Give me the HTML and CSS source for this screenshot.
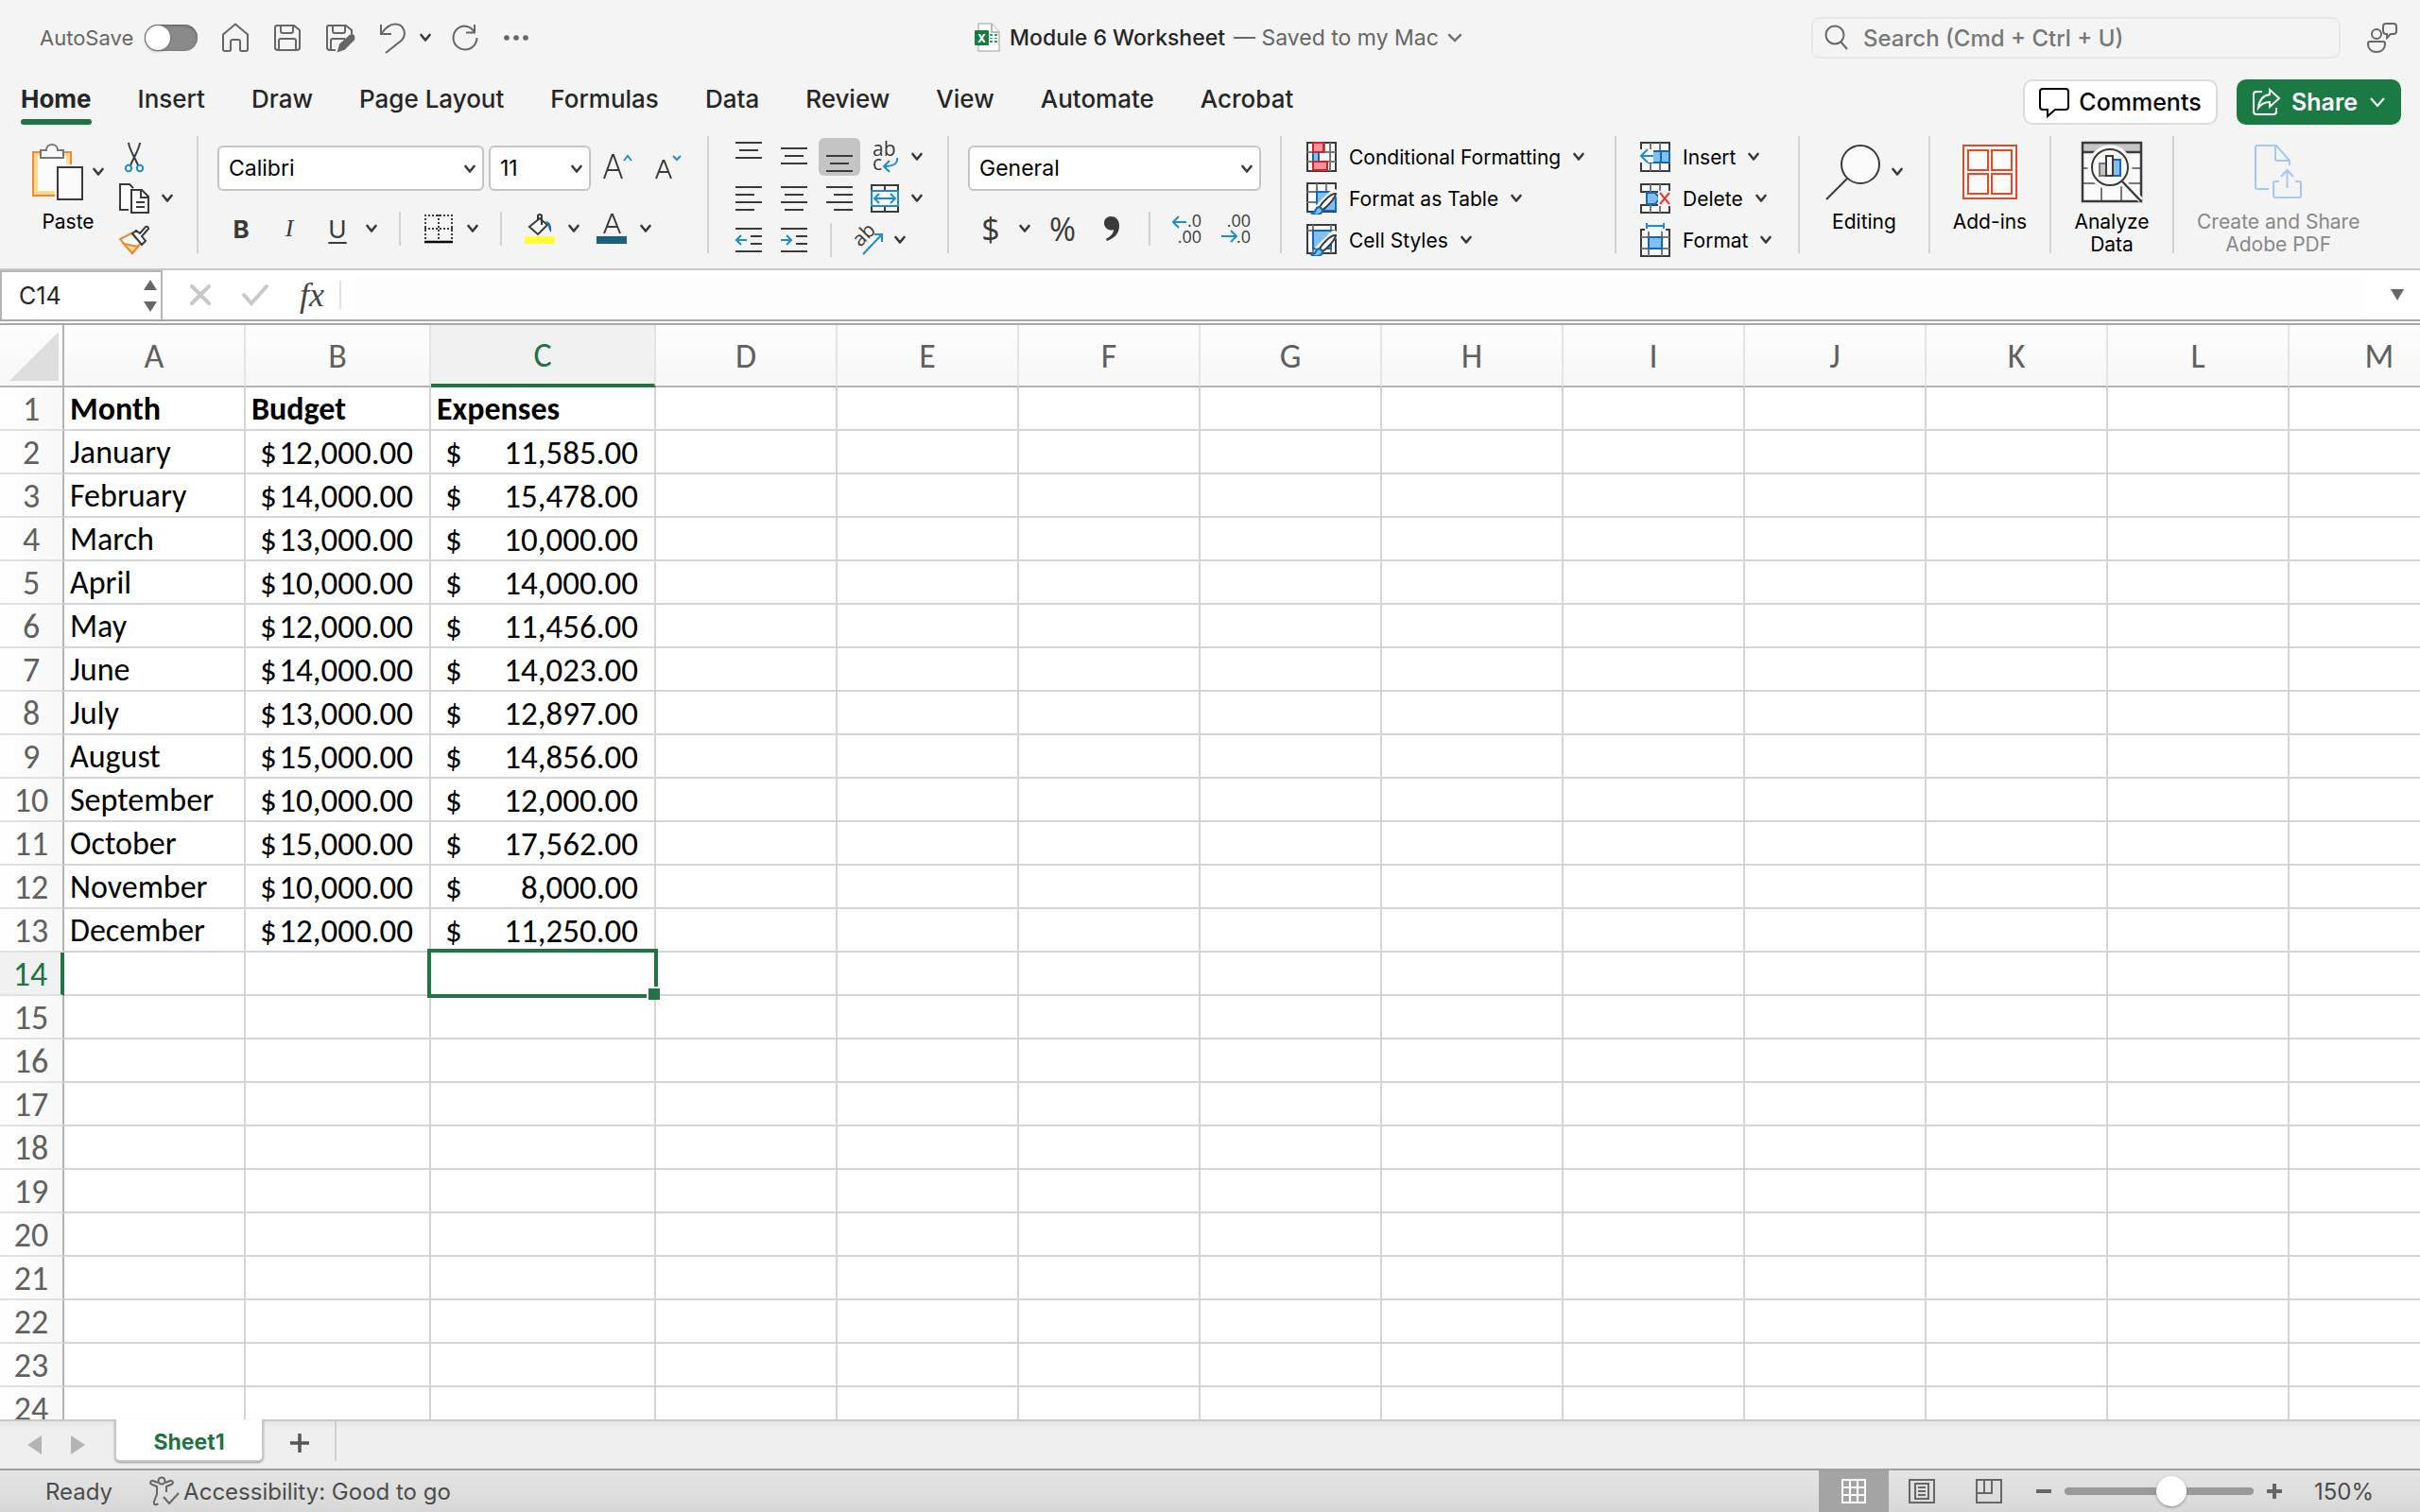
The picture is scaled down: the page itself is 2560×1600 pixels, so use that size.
FILE: index.html
```html
<!DOCTYPE html>
<html lang="en">
<head>
    <meta charset="UTF-8">
    <meta name="viewport" content="width=device-width, initial-scale=1.0">
    <title>Module 6 Worksheet</title>
    <link rel="stylesheet" href="styles.css">
</head>
<body>

    <!-- shared symbols -->
    <svg class="defs" aria-hidden="true">
        <symbol id="chev" viewBox="0 0 12 10"><path d="M1.500 2 6 7.500 10.500 2" fill="none" stroke="currentColor" stroke-width="2.600" stroke-linecap="round" stroke-linejoin="round"/></symbol>
        <symbol id="brush" viewBox="0 0 32 32">
            <path d="M31 12 16 27l-4-3L27 9q3-2 4 0z" fill="#f4f4f4" stroke="#f4f4f4" stroke-width="4"/>
            <path d="M31 11c0 4-9 14-14 17l-3-3c3-5 12-15 17-14z" fill="#fafafa" stroke="#3a3a38" stroke-width="2"/>
            <path d="M14 25c-4 0-4 3-5 5-1 1-3 1-4 1 4 4 12 2 12-3z" fill="#83beec" stroke="#1068b8" stroke-width="2"/>
        </symbol>
    </svg>

    <header class="titlebar">
        <div class="quick">
            <label class="autosave">AutoSave <input type="checkbox" class="toggle"></label>
            <button aria-label="Home"><svg width="30" height="32" viewBox="0 0 30 32"><path d="M2 12.500 15 1.500l13 11V28a2 2 0 0 1-2 2h-4.500a1.500 1.500 0 0 1-1.500-1.500V20a2 2 0 0 0-2-2h-6a2 2 0 0 0-2 2v8.500A1.500 1.500 0 0 1 8.500 30H4a2 2 0 0 1-2-2z"/></svg></button>
            <button aria-label="Save"><svg width="30" height="32" viewBox="0 0 30 32"><path d="M4 3h18l6 5v18a3 3 0 0 1-3 3H5a3 3 0 0 1-3-3V5a2 2 0 0 1 2-2zM8 3v6a2 2 0 0 0 2 2h9a2 2 0 0 0 2-2V3M6 29V19a2 2 0 0 1 2-2h14a2 2 0 0 1 2 2v10"/></svg></button>
            <button aria-label="Save as"><svg width="32" height="32" viewBox="0 0 32 32"><path d="M11 29H5a3 3 0 0 1-3-3V5a2 2 0 0 1 2-2h18l6 5v4M8 3v6a2 2 0 0 0 2 2h9a2 2 0 0 0 2-2V3M6 29V19a2 2 0 0 1 2-2h13"/><path d="M14 30l2-7 10-9q3-2 4 0t0 4L20 28z" fill="#666"/></svg></button>
            <button aria-label="Undo"><svg width="28" height="34" viewBox="0 0 28 34"><path d="M2 3v10h11M2.500 12.500C7 6 11 2.500 17 2.500c9 0 13 10 7 17L7 33"/></svg></button>
            <button class="more" aria-label="Undo history"><svg class="chev"><use href="#chev"/></svg></button>
            <button aria-label="Redo"><svg width="30" height="32" viewBox="0 0 30 32"><path d="M25 2v8.500h-9M25 10C22 5.500 18 3.500 14 3.500A12.500 12.500 0 1 0 27.500 16"/></svg></button>
            <button aria-label="More commands"><svg width="28" height="8" viewBox="0 0 28 8"><g fill="#666" stroke="none"><circle cx="4" cy="4" r="2.800"/><circle cx="14" cy="4" r="2.800"/><circle cx="24" cy="4" r="2.800"/></g></svg></button>
        </div>
        <h1 class="doc-title">
            <svg width="28" height="34" viewBox="0 0 28 34"><path d="M4 2h14l8 9v20H4z" fill="#fff" stroke="#bbb" stroke-width="1.500"/><path d="M18 2v9h8" fill="#f4f4f4" stroke="#bbb"/><rect x="16" y="13" width="8" height="9" fill="#21a366"/><path d="M16 16h8M16 19h8M20 13v9" stroke="#fff"/><rect y="9" width="15" height="16" rx="1" fill="#1b7a43"/><text x="7.500" y="21.500" text-anchor="middle" fill="#fff">X</text></svg>
            Module 6 Worksheet <span>— Saved to my Mac</span>
            <svg width="16" height="10" viewBox="0 0 16 10"><path d="M2 2l6 6 6-6" fill="none" stroke="#777" stroke-width="2.500" stroke-linecap="round"/></svg>
        </h1>
        <div class="title-right">
            <label class="search">
                <svg width="26" height="28" viewBox="0 0 26 28"><circle cx="11" cy="11" r="9.500"/><path d="M17.500 18.500 24 26"/></svg>
                <input type="text" placeholder="Search (Cmd + Ctrl + U)" aria-label="Search">
            </label>
            <button aria-label="Account"><svg width="32" height="34" viewBox="0 0 32 34"><circle cx="10" cy="13" r="5"/><path d="M3 21h14a2 2 0 0 1 2 2c0 6-4 9-9 9s-9-3-9-9a2 2 0 0 1 2-2zM20 2h8a3 3 0 0 1 3 3v5a3 3 0 0 1-3 3h-3l-4 4v-4h-1a3 3 0 0 1-3-3V5a3 3 0 0 1 3-3z"/></svg></button>
        </div>
    </header>

    <div class="tabrow">
        <nav class="tabs">
            <a href="#" class="active">Home</a>
            <a href="#">Insert</a>
            <a href="#">Draw</a>
            <a href="#">Page Layout</a>
            <a href="#">Formulas</a>
            <a href="#">Data</a>
            <a href="#">Review</a>
            <a href="#">View</a>
            <a href="#">Automate</a>
            <a href="#">Acrobat</a>
        </nav>
        <button class="comments"><svg width="32" height="32" viewBox="0 0 32 32"><path d="M4 2h24a3 3 0 0 1 3 3v16a3 3 0 0 1-3 3H17l-8 7v-7H4a3 3 0 0 1-3-3V5a3 3 0 0 1 3-3z"/></svg>Comments</button>
        <button class="share"><svg width="30" height="30" viewBox="0 0 30 30"><path d="M11 4H5a3 3 0 0 0-3 3v18a3 3 0 0 0 3 3h18a3 3 0 0 0 3-3v-4M19 2l10 9-10 9v-5c-6 0-9 2-12 6 1-8 5-13 12-14z"/></svg>Share<svg width="18" height="12" viewBox="0 0 18 12"><path d="M2 2l7 8 7-8"/></svg></button>
    </div>

    <div class="ribbon">
        <div class="group clipboard">
            <button class="big">
                <span class="big-icon">
                    <svg width="54" height="60" viewBox="0 0 54 60"><path d="M1 9h40v46H1z" fill="#f9db8f" stroke="#ed8733"/><path d="M6 13h30v37H6z" fill="#fafafa" stroke="none"/><path d="M9 7h6c0-8 12-8 12 0h6v8H9z" fill="#fafafa" stroke="#797774"/><path d="M24 22h30v38H24z" fill="#f4f4f4" stroke="none"/><path d="M27 25h26v34H27z" fill="#fafafa"/></svg>
                    <svg class="chev"><use href="#chev"/></svg>
                </span>
                Paste
            </button>
            <div class="stack">
                <button aria-label="Cut"><svg width="32" height="32" viewBox="0 0 32 32"><path d="M10 1c1 8 7 16 10 24M22 1c-1 8-7 16-10 24" stroke="#3a3a38"/><g stroke="#1e8bcd"><circle cx="10" cy="28" r="3.200"/><circle cx="22" cy="28" r="3.200"/></g></svg></button>
                <button aria-label="Copy"><svg width="32" height="32" viewBox="0 0 32 32"><path d="M10 28H1V1h10l4 4" fill="#fafafa" stroke="#3a3a38"/><path d="M13 7h11l7 7v17H13z" fill="#fafafa" stroke="#3a3a38"/><path d="M23 7v8h8M18 20h9M18 25h9" stroke="#3a3a38"/></svg><svg class="chev"><use href="#chev"/></svg></button>
                <button aria-label="Format painter"><svg width="32" height="32" viewBox="0 0 32 32"><path d="M13 9 1 15l13 15 9-11z" fill="#fff" stroke="#ed8733"/><path d="M5 20l15 3-6 7z" fill="#f9db8f" stroke="#ed8733"/><path d="M14 9 18 6l4 3 6-7q3-1 3 2l-7 8 4 5-4 4z" fill="#fafafa" stroke="#3a3a38"/></svg></button>
            </div>
        </div>

        <div class="group font">
            <div class="row">
                <div class="select font-name"><select aria-label="Font"><option>Calibri</option></select><svg class="chev"><use href="#chev"/></svg></div>
                <div class="select font-size"><select aria-label="Font size"><option>11</option></select><svg class="chev"><use href="#chev"/></svg></div>
                <button aria-label="Increase font size"><svg width="32" height="32" viewBox="0 0 32 32"><path d="M1 27 10 2h1l9 25M4 18h13" stroke="#3a3a38"/><path d="M22 8l4-5 4 5" stroke="#1e8bcd"/></svg></button>
                <button aria-label="Decrease font size"><svg width="32" height="32" viewBox="0 0 32 32"><path d="M5 27 12.500 8h1L21 27M8 20h10" stroke="#3a3a38"/><path d="M23 3l4 4 4-4" stroke="#1e8bcd"/></svg></button>
            </div>
            <div class="row tools">
                <button class="bold">B</button>
                <button class="italic">I</button>
                <div class="split"><button class="underline">U</button><button aria-label="Underline options"><svg class="chev"><use href="#chev"/></svg></button></div>
                <i class="sep"></i>
                <div class="split"><button aria-label="Borders"><svg width="32" height="32" viewBox="0 0 32 32"><path d="M1 2h30M1 16h30M2 1v28M16 1v28M30 1v28" stroke="#3a3a38" stroke-dasharray="2 2"/><path d="M1 30h30" stroke="#000" stroke-width="2.500"/></svg></button><button aria-label="Border options"><svg class="chev"><use href="#chev"/></svg></button></div>
                <i class="sep"></i>
                <div class="split"><button aria-label="Fill color"><svg width="32" height="32" viewBox="0 0 32 32"><path d="M16 5 5 14l9 8 10-10z" fill="#fafafa" stroke="#3a3a38"/><path d="M18 12V2q-2-2-4 0v4" stroke="#3a3a38"/><path d="M22 8c4 0 7 4 6 12-2-2-3-5-3-8z" fill="#1068b8" stroke="none"/><path d="M0 24h32v8H0z" fill="#fffb3d" stroke="none"/></svg></button><button aria-label="Fill color options"><svg class="chev"><use href="#chev"/></svg></button></div>
                <div class="split"><button aria-label="Font color"><svg width="32" height="32" viewBox="0 0 32 32"><path d="M8 21 16 1h1l8 20M11 14h11" stroke="#3a3a38"/><path d="M0 24h32v8H0z" fill="#1b6282" stroke="none"/></svg></button><button aria-label="Font color options"><svg class="chev"><use href="#chev"/></svg></button></div>
            </div>
        </div>

        <div class="group align">
            <div class="row">
                <button aria-label="Top align"><svg width="28" height="32" viewBox="0 0 28 32"><path d="M0 1h28M4 9h20M0 17h28"/></svg></button>
                <button aria-label="Middle align"><svg width="28" height="32" viewBox="0 0 28 32"><path d="M0 7h28M4 15h20M0 23h28"/></svg></button>
                <button class="active" aria-label="Bottom align"><svg width="28" height="32" viewBox="0 0 28 32"><path d="M0 15h28M4 23h20M0 31h28"/></svg></button>
                <button aria-label="Wrap text"><svg width="32" height="34" viewBox="0 0 32 34"><g class="glyph"><text x="3" y="16">ab</text><text x="3" y="31">c</text></g><path d="M29 18c1 6-4 9-13 9M21 21l-6 6 6 6" stroke="#1e8bcd"/></svg></button>
                <button class="drop" aria-label="Wrap options"><svg class="chev"><use href="#chev"/></svg></button>
            </div>
            <div class="row">
                <button aria-label="Align left"><svg width="28" height="26" viewBox="0 0 28 26"><path d="M0 1h28M0 9h20M0 17h28M0 25h20"/></svg></button>
                <button aria-label="Center"><svg width="28" height="26" viewBox="0 0 28 26"><path d="M0 1h28M4 9h20M0 17h28M4 25h20"/></svg></button>
                <button aria-label="Align right"><svg width="28" height="26" viewBox="0 0 28 26"><path d="M0 1h28M8 9h20M0 17h28M8 25h20"/></svg></button>
                <button aria-label="Merge"><svg width="30" height="30" viewBox="0 0 30 30"><path d="M1 1h28v28H1zM15 1v6M15 23v6" fill="#fafafa"/><path d="M1 7h28v16H1z" fill="#fafafa" stroke="#1e8bcd"/><path d="M5 15h20M9 10l-5 5 5 5M21 10l5 5-5 5" stroke="#1e8bcd"/></svg></button>
                <button class="drop" aria-label="Merge options"><svg class="chev"><use href="#chev"/></svg></button>
            </div>
            <div class="row">
                <button aria-label="Decrease indent"><svg width="28" height="26" viewBox="0 0 28 26"><path d="M0 1h28M16 9h12M16 17h12M0 25h28"/><path d="M1 13h11M6 8l-5 5 5 5" stroke="#1e8bcd"/></svg></button>
                <button aria-label="Increase indent"><svg width="28" height="26" viewBox="0 0 28 26"><path d="M0 1h28M16 9h12M16 17h12M0 25h28"/><path d="M0 13h11M6 8l5 5-5 5" stroke="#1e8bcd"/></svg></button>
                <i class="sep"></i>
                <button aria-label="Orientation"><svg width="34" height="32" viewBox="0 0 34 32"><g class="glyph"><text x="0" y="0" transform="translate(9 24) rotate(-45)">ab</text></g><path d="M12 31 32 10M24 10h8v8" stroke="#1e8bcd"/></svg></button>
                <button class="drop" aria-label="Orientation options"><svg class="chev"><use href="#chev"/></svg></button>
            </div>
        </div>

        <div class="group number">
            <div class="select"><select aria-label="Number format"><option>General</option></select><svg class="chev"><use href="#chev"/></svg></div>
            <div class="row tools">
                <div class="split"><button class="sign">$</button><button aria-label="Currency options"><svg class="chev"><use href="#chev"/></svg></button></div>
                <button class="sign" aria-label="Percent">%</button>
                <button aria-label="Comma style"><svg width="16" height="26" viewBox="0 0 16 26"><path d="M7 0c5 0 9 3 9 10 0 8-5 13-13 16l-1-2c5-3 8-6 8-10-5 2-10-2-10-7 0-4 3-7 7-7z" fill="#3a3a38" stroke="none"/></svg></button>
                <i class="sep"></i>
                <button aria-label="Increase decimal"><svg width="32" height="32" viewBox="0 0 32 32"><g class="digits"><text x="31" y="14" text-anchor="end">.0</text><text x="31" y="31" text-anchor="end">.00</text></g><path d="M1 9h14M7 3 1 9l6 6" stroke="#1e8bcd"/></svg></button>
                <button aria-label="Decrease decimal"><svg width="32" height="32" viewBox="0 0 32 32"><g class="digits"><text x="31" y="14" text-anchor="end">.00</text><text x="31" y="31" text-anchor="end">.0</text></g><path d="M0 24h15M10 18l6 6-6 6" stroke="#1e8bcd"/></svg></button>
            </div>
        </div>

        <div class="group styles">
            <div class="stack">
                <button><svg width="32" height="32" viewBox="0 0 32 32"><path d="M1 1h30v30H1z" fill="#fafafa" stroke="#3a3a38"/><path d="M1 11h30M1 21h30M7 1v30M19 1v30M25 1v30" stroke="#797774"/><path d="M7 11h6v10H7z" fill="#83beec" stroke="#1068b8"/><path d="M14 12h9v8h-9z" fill="#fafafa" stroke="none"/><path d="M7 1h11v10H7zM7 21h15v9H7z" fill="#ff9199" stroke="#d02424"/></svg>Conditional Formatting<svg class="chev"><use href="#chev"/></svg></button>
                <button><svg width="32" height="34" viewBox="0 0 32 34"><path d="M31 31H1V1h30z" fill="#fafafa" stroke="#3a3a38"/><path d="M1 10h30M1 21h30M11 1v30M21 1v30" stroke="#797774"/><path d="M11 10h20v20H11z" fill="#83beec" stroke="#1068b8"/><use href="#brush" width="32" height="34"/></svg>Format as Table<svg class="chev"><use href="#chev"/></svg></button>
                <button><svg width="32" height="34" viewBox="0 0 32 34"><path d="M31 31H1V1h30z" fill="#fafafa" stroke="#3a3a38"/><path d="M1 7h30M7 1v30M26 1v30" stroke="#797774"/><path d="M7 7h19v19H7z" fill="#83beec" stroke="#1068b8"/><use href="#brush" width="32" height="34"/></svg>Cell Styles<svg class="chev"><use href="#chev"/></svg></button>
            </div>
        </div>

        <div class="group cells">
            <div class="stack">
                <button><svg width="32" height="32" viewBox="0 0 32 32"><path d="M1 1h30v30H1z" fill="#fafafa" stroke="#3a3a38"/><path d="M11 1v30M21 1v30" stroke="#797774"/><path d="M9 10h22v12H9z" fill="#83beec" stroke="#1068b8"/><path d="M22 10v12" stroke="#1068b8"/><path d="M0 8h14v14H0z" fill="#fafafa" stroke="none"/><path d="M1 15h13M8 8l-7 7 7 7" stroke="#1e8bcd"/></svg>Insert<svg class="chev"><use href="#chev"/></svg></button>
                <button><svg width="32" height="32" viewBox="0 0 32 32"><path d="M1 9V1h30v8zM1 23v8h30v-8z" fill="#fafafa" stroke="#3a3a38"/><path d="M11 1v8M21 1v8M11 23v8M21 23v8" stroke="#797774"/><path d="M7 10h9l5 6-5 6H7z" fill="#83beec" stroke="#1068b8"/><path d="M19 8h13v16H19z" fill="#f4f4f4" stroke="none"/><path d="M21 10l10 12M31 10 21 22" stroke="#e8363c"/></svg>Delete<svg class="chev"><use href="#chev"/></svg></button>
                <button><svg width="32" height="36" viewBox="0 0 32 36"><path d="M1 7h30v28H1z" fill="#fafafa" stroke="#3a3a38"/><path d="M1 15h30M1 27h30M9 7v28M23 7v28" stroke="#797774"/><path d="M9 15h14v12H9z" fill="#83beec" stroke="#1068b8"/><path d="M5 0h22v9H5z" fill="#f4f4f4" stroke="none"/><path d="M7 3h18M7 0v6M25 0v6" stroke="#1e8bcd"/></svg>Format<svg class="chev"><use href="#chev"/></svg></button>
            </div>
        </div>

        <div class="group editing">
            <button class="big">
                <span class="big-icon"><svg width="60" height="60" viewBox="0 0 60 60"><circle cx="37" cy="22" r="20" fill="#fafafa"/><path d="M23 37 1 59"/></svg><svg class="chev"><use href="#chev"/></svg></span>
                Editing
            </button>
        </div>
        <div class="group addins">
            <button class="big">
                <span class="big-icon"><svg width="58" height="58" viewBox="0 0 58 58"><g fill="#fafafa" stroke="#e0492a"><path d="M1 1h56v56H1z"/><path d="M6 6h21v21H6zM31 6h21v21H31zM6 31h21v21H6zM31 31h21v21H31z"/></g></svg></span>
                Add-ins
            </button>
        </div>
        <div class="group analyze">
            <button class="big">
                <span class="big-icon"><svg width="64" height="64" viewBox="0 0 64 64"><path d="M1 1h62v62H1z" fill="#fafafa" stroke="none"/><path d="M1 1h62v10H1z" fill="#c8c6c4" stroke="none"/><path d="M1 28h62M1 44h62M21 44v19M42 44v19" stroke="#797774"/><path d="M1 11h62M1 1h62v62H1z" stroke-width="2.500"/><circle cx="30" cy="27" r="22" fill="#fafafa" stroke="#fafafa" stroke-width="3"/><circle cx="30" cy="27" r="19" fill="#fafafa"/><path d="M19 23h7v13h-7z" fill="#c8c6c4" stroke="#797774"/><path d="M33 19h8v17h-8z" fill="#83beec" stroke="#1068b8"/><path d="M26 15h7v21h-7z" fill="#fafafa"/><path d="M44 42 63 62" stroke="#fafafa" stroke-width="6"/><path d="M43 42 63 63" stroke-width="2.500"/></svg></span>
                Analyze<br>Data
            </button>
        </div>
        <div class="group adobe">
            <button class="big" disabled>
                <span class="big-icon"><svg width="50" height="58" viewBox="0 0 50 58"><path d="M15 47H3a2 2 0 0 1-2-2V3a2 2 0 0 1 2-2h20l14 16v5M22 1v14a2 2 0 0 0 2 2h13M26 39h-4a2 2 0 0 0-2 2v13a2 2 0 0 0 2 2h25a2 2 0 0 0 2-2V41a2 2 0 0 0-2-2h-4M34.500 46V28M28 34l6.500-7 6.500 7" stroke="#a5c8f0"/></svg></span>
                Create and Share<br>Adobe PDF
            </button>
        </div>
    </div>

    <div class="formula-bar">
        <div class="name-box">
            <input type="text" value="C14" aria-label="Name box">
            <svg width="14" height="34" viewBox="0 0 14 34"><path d="M0 11 7 0l7 11zM0 23h14L7 34z" fill="#666"/></svg>
        </div>
        <button aria-label="Cancel"><svg width="22" height="22" viewBox="0 0 22 22"><path d="M2 2l18 18M20 2 2 20" stroke="#c8c8c8" stroke-width="4"/></svg></button>
        <button aria-label="Enter"><svg width="28" height="22" viewBox="0 0 28 22"><path d="M2 11l8 9L26 2" stroke="#c8c8c8" stroke-width="4"/></svg></button>
        <button class="fx">fx</button>
        <input type="text" class="formula" aria-label="Formula">
        <button aria-label="Expand formula bar"><svg width="14" height="12" viewBox="0 0 14 12"><path d="M0 0h14L7 12z" fill="#666"/></svg></button>
    </div>

    <main class="sheet">
        <table>
            <thead><tr id="columns"></tr></thead>
            <tbody id="rows"></tbody>
        </table>
    </main>

    <div class="sheet-tabs">
        <button aria-label="Previous sheet"><svg width="15" height="20" viewBox="0 0 15 20"><path d="M15 0v20L0 10z" fill="#b4b4b4"/></svg></button>
        <button aria-label="Next sheet"><svg width="15" height="20" viewBox="0 0 15 20"><path d="M0 0v20l15-10z" fill="#b4b4b4"/></svg></button>
        <button class="sheet-tab">Sheet1</button>
        <button class="add" aria-label="Add sheet"><svg width="20" height="20" viewBox="0 0 20 20"><path d="M10 0v20M0 10h20" stroke="#555" stroke-width="3.500"/></svg></button>
    </div>

    <footer class="status">
        <span>Ready</span>
        <button class="access"><svg width="32" height="32" viewBox="0 0 32 32"><circle cx="13" cy="5" r="3.500"/><path d="M9 7 4 5C1 4 0 8 3 9l5 2v8l-3 8c-1 4 3 4 4 2M17 7l5-2c3-1 4 3 1 4l-5 2v6M15 22l6 7 10-11"/></svg>Accessibility: Good to go</button>
        <div class="views">
            <button class="active" aria-label="Normal view"><svg width="26" height="28" viewBox="0 0 26 28"><path d="M1 2h24v24H1zM1 10h24M1 18h24M9 2v24M17 2v24" stroke="#fff"/></svg></button>
            <button aria-label="Page layout view"><svg width="28" height="28" viewBox="0 0 28 28"><path d="M1 2h26v24H1zM7 6h14v16H7zM10 10h8M10 14h8M10 18h8"/></svg></button>
            <button aria-label="Page break view"><svg width="28" height="28" viewBox="0 0 28 28"><path d="M1 2h26v24H1zM1 16h16V2M9 2v14"/></svg></button>
        </div>
        <button class="zoom-step" aria-label="Zoom out"><svg width="16" height="16" viewBox="0 0 16 16"><path d="M0 8h16" stroke-width="4"/></svg></button>
        <input type="range" class="zoom" min="0" max="100" value="58" aria-label="Zoom">
        <button class="zoom-step" aria-label="Zoom in"><svg width="16" height="16" viewBox="0 0 16 16"><path d="M0 8h16M8 0v16" stroke-width="4"/></svg></button>
        <span class="percent">150%</span>
    </footer>

    <script src="script.js"></script>
</body>
</html>
```

FILE: styles.css
```css
* {
    box-sizing: border-box;
}
body {
    margin: 0;
    height: 100vh;
    display: flex;
    flex-direction: column;
    overflow: hidden;
    background-color: #f4f4f4;
    color: #262626;
    font-family: Inter, sans-serif;
    font-size: 22px;
}
button {
    display: flex;
    align-items: center;
    justify-content: center;
    padding: 0;
    border: none;
    background: none;
    color: inherit;
    font: inherit;
}
input, select {
    border: none;
    outline: none;
    background: none;
    font: inherit;
    color: inherit;
}
svg {
    flex: none;
    fill: none;
    stroke-width: 2;
    overflow: visible;
}
.defs {
    position: absolute;
    width: 0;
    height: 0;
}
.chev {
    width: 12px;
    height: 10px;
    color: #3a3a38;
}

/* title bar */
.titlebar {
    display: grid;
    grid-template-columns: 1fr auto 1fr;
    align-items: center;
    height: 80px;
    padding: 0 24px 0 42px;
    stroke: #666;
}
.quick {
    display: flex;
    align-items: center;
    gap: 25px;
}
.autosave {
    display: flex;
    align-items: center;
    gap: 12px;
    color: #666;
}
.toggle {
    appearance: none;
    width: 56px;
    height: 28px;
    margin: 0;
    border-radius: 14px;
    background-color: #8a8a8a;
    box-shadow: inset 0 1px 3px #555;
}
.toggle::before {
    content: "";
    display: block;
    width: 26px;
    height: 26px;
    margin: 1px;
    border-radius: 50%;
    background-color: #fff;
    box-shadow: 0 1px 3px #666;
}
.quick .more {
    margin: 0 -4px 0 -10px;
}
.doc-title {
    display: flex;
    align-items: center;
    gap: 9px;
    margin: 0;
    font-size: 23px;
    font-weight: 500;
}
.doc-title text {
    font-size: 12px;
    font-weight: 700;
    stroke: none;
}
.doc-title span {
    color: #666;
    font-weight: 400;
}
.doc-title svg {
    stroke: none;
}
.title-right {
    display: flex;
    align-items: center;
    justify-content: flex-end;
    gap: 28px;
}
.search {
    display: flex;
    align-items: center;
    gap: 15px;
    width: 560px;
    height: 44px;
    padding: 0 12px;
    border: 2px solid #e8e8e8;
    border-radius: 9px;
    color: #777;
    font-size: 24px;
    font-weight: 500;
}
.search input {
    flex: 1;
    padding: 0;
}
.search input::placeholder {
    color: #777;
}

/* tabs */
.tabrow {
    display: flex;
    align-items: flex-end;
    height: 52px;
    padding: 0 20px 0 22px;
}
.tabs {
    display: flex;
    flex: 1;
    gap: 49px;
}
.tabs a {
    position: relative;
    height: 52px;
    line-height: 50px;
    color: #262626;
    font-size: 26px;
    font-weight: 500;
    text-decoration: none;
}
.tabs .active {
    font-weight: 700;
}
.tabs .active::after {
    content: "";
    position: absolute;
    left: 0;
    right: 0;
    bottom: 0;
    height: 6px;
    border-radius: 3px;
    background-color: #217346;
}
.comments, .share {
    height: 48px;
    border-radius: 10px;
    font-size: 25px;
    font-weight: 500;
}
.comments {
    gap: 10px;
    width: 206px;
    margin-right: 20px;
    border: 2px solid #dcdcdc;
    background-color: #fff;
    color: #000;
    stroke: #000;
}
.share {
    gap: 12px;
    width: 174px;
    background-color: #1b7a43;
    color: #fff;
    stroke: #fff;
    font-weight: 600;
}

/* ribbon */
.ribbon {
    display: flex;
    padding: 12px 0 16px;
    border-bottom: 2px solid #c8c8c8;
    height: 154px;
    flex: none;
    color: #000;
    font-size: 21px;
    stroke: #3a3a38;
}
.group {
    flex: none;
    height: 124px;
    border-right: 2px solid #d2d2d2;
}
.row, .split {
    display: flex;
    align-items: center;
}
.stack {
    display: grid;
    grid-auto-rows: 32px;
    gap: 12px;
    justify-items: start;
    padding-top: 6px;
}
.stack button {
    gap: 13px;
}
.big {
    flex-direction: column;
    padding-top: 6px;
    line-height: 24px;
}
.big:disabled {
    color: #888;
}
.big-icon {
    display: flex;
    align-items: center;
    gap: 10px;
    height: 64px;
    margin-bottom: 9px;
}
.sep {
    width: 2px;
    height: 36px;
    background-color: #d2d2d2;
}
.select {
    position: relative;
    height: 48px;
}
.select select {
    appearance: none;
    width: 100%;
    height: 48px;
    padding: 0 10px;
    border: 2px solid #c4c4c4;
    border-radius: 6px;
    background-color: #fff;
    font-size: 23px;
}
.select .chev {
    position: absolute;
    right: 9px;
    top: 20px;
}
.tools {
    height: 36px;
    margin-top: 22px;
}
.tools button {
    width: 32px;
    height: 36px;
}
.split {
    gap: 8px;
}
.split button + button {
    width: 24px;
}
.clipboard {
    display: flex;
    gap: 16px;
    width: 210px;
    padding-left: 34px;
}
.clipboard .big, .clipboard .stack {
    align-self: flex-start;
}
.font {
    width: 540px;
    padding: 10px 0 0 20px;
}
.font .row {
    gap: 5px;
}
.font-name {
    width: 282px;
}
.font-size {
    width: 108px;
}
.font .row > button {
    margin-left: 8px;
}
.font .font-size + button + button {
    margin-left: 14px;
}
.font .tools {
    gap: 12px;
    padding-left: 9px;
}
.font .tools > button {
    margin: 0 7px 0 0;
}
.font .sep {
    margin: 0 12px 0 5px;
}
.bold, .italic, .underline, .sign {
    color: #3a3a38;
    font-size: 26px;
}
.bold {
    font-weight: 700;
}
.italic {
    font-family: "Liberation Serif", serif;
    font-style: italic;
}
.underline {
    text-decoration: underline;
    text-underline-offset: 4px;
}
.sign {
    font-family: "Open Sans", sans-serif;
    font-size: 34px;
}
.align {
    display: grid;
    grid-auto-rows: 40px;
    gap: 4px;
    width: 254px;
    padding: 2px 0 0 20px;
}
.align .row {
    gap: 4px;
}
.align button {
    width: 44px;
    height: 40px;
}
.align .drop {
    width: 24px;
    margin-left: -4px;
}
.align .active {
    border-radius: 6px;
    background-color: #c4c4c4;
}
.align .sep {
    margin: 0 12px;
}
.glyph, .digits {
    fill: #3a3a38;
    stroke: none;
    font-family: "Open Sans", sans-serif;
    font-size: 21px;
}
.digits {
    font-size: 18px;
}
.number {
    width: 352px;
    padding: 10px 20px 0;
}
.number .tools {
    gap: 20px;
    padding-left: 8px;
}
.number .split {
    margin-right: -8px;
}
.number .sep {
    margin: 0 3px;
}
.styles {
    width: 354px;
    padding-left: 26px;
}
.cells {
    width: 194px;
    padding-left: 25px;
}
.editing, .addins, .analyze {
    display: flex;
    align-items: flex-start;
    justify-content: center;
}
.editing {
    width: 138px;
}
.addins {
    width: 128px;
}
.analyze {
    width: 130px;
}
.adobe {
    padding-left: 24px;
    border: none;
}

/* formula bar */
.formula-bar {
    display: flex;
    align-items: center;
    flex: none;
    height: 58px;
    padding-right: 17px;
    border-bottom: 6px double #a8a8a8;
    background-color: #fff;
    stroke-linecap: round;
}
.name-box {
    display: flex;
    align-items: center;
    width: 172px;
    height: 52px;
    margin-right: 29px;
    padding: 0 4px 0 18px;
    border: 2px solid #b4b4b4;
    border-bottom: none;
    font-size: 25px;
}
.name-box input {
    flex: 1;
    min-width: 0;
    padding: 0;
}
.formula-bar button {
    margin-right: 33px;
}
.formula-bar .fx {
    height: 30px;
    margin-right: 14px;
    padding-right: 16px;
    border-right: 2px solid #e0e0e0;
    color: #444;
    font-family: "Liberation Serif", serif;
    font-size: 36px;
    font-style: italic;
}
.formula {
    flex: 1;
    height: 38px;
    background-color: #fdfdfd;
}
.formula-bar .formula + button {
    margin: 0 0 0 30px;
}

/* grid */
.sheet {
    flex: 1;
    min-height: 0;
    overflow: hidden;
    background-color: #fff;
}
table {
    width: max-content;
    border-spacing: 0;
    table-layout: fixed;
}
th, td {
    width: 192px;
    min-width: 192px;
    height: 46px;
    padding: 2px 6px 0;
    border-right: 2px solid #d4d4d4;
    border-bottom: 2px solid #d4d4d4;
    color: #000;
    font-family: Calibri, Lato, sans-serif;
    font-size: 34px;
    line-height: 40px;
    text-align: left;
    white-space: nowrap;
}
td:nth-child(3), th:nth-child(3) {
    width: 196px;
    min-width: 196px;
}
td:nth-child(4), th:nth-child(4) {
    width: 238px;
    min-width: 238px;
}
thead th {
    height: 66px;
    border-right-color: #e4e4e4;
    border-bottom-color: #b4b4b4;
    background: linear-gradient(#fdfdfd, #f7f7f7);
}
thead th, .row-number {
    color: #606060;
    font-size: 36px;
    font-weight: 400;
    text-align: center;
}
thead .corner, .row-number {
    width: 68px;
    min-width: 68px;
    border-right-color: #b4b4b4;
}
thead .corner {
    padding: 7px 4px 5px 10px;
    line-height: 0;
}
.row-number {
    padding: 2px 0 0;
    border-bottom-color: #e0e0e0;
    background: linear-gradient(90deg, #fff, #f7f7f7);
}
thead .current {
    border-bottom: 4px solid #217346;
    background: #f1f1f1;
    color: #217346;
}
.row-number.current {
    border-right: 4px solid #217346;
    background: #f1f1f1;
    color: #217346;
}
.heading {
    font-weight: 700;
}
.money {
    padding: 2px 17px 0 15px;
    font-size: 35px;
}
.money div {
    display: flex;
    justify-content: space-between;
}
.selected {
    position: relative;
}
.selected::before {
    content: "";
    position: absolute;
    inset: -4px;
    border: 4px solid #217346;
}
.selected::after {
    content: "";
    position: absolute;
    right: -6px;
    bottom: -6px;
    width: 12px;
    height: 12px;
    border: solid #fff;
    border-width: 2px 0 0 2px;
    background-color: #217346;
}

/* sheet tabs */
.sheet-tabs {
    display: flex;
    flex: none;
    height: 52px;
    padding-left: 29px;
    border-top: 2px solid #c8c8c8;
    background: linear-gradient(#e6e6e6, #efefef 8px);
}
.sheet-tabs button {
    height: 50px;
    margin-right: 31px;
}
.sheet-tabs .sheet-tab {
    width: 158px;
    height: 45px;
    margin: -2px 0 0;
    padding-top: 5px;
    border: 2px solid #c8c8c8;
    border-top: none;
    border-radius: 0 0 6px 6px;
    background-color: #fff;
    box-shadow: 0 1px 2px #999;
    color: #217346;
    font-size: 23px;
    font-weight: 700;
}
.sheet-tabs .add {
    width: 77px;
    height: 42px;
    margin: 0;
    padding-top: 4px;
    border-right: 2px solid #d0d0d0;
}

/* status bar */
.status {
    display: flex;
    align-items: center;
    flex: none;
    height: 46px;
    padding: 0 49px 0 48px;
    border-top: 2px solid #a0a0a0;
    background: linear-gradient(#e4e4e4, #d8d8d8);
    color: #4c4c4c;
    font-size: 24px;
    stroke: #666;
}
.access {
    gap: 4px;
    margin-left: 39px;
}
.views {
    display: flex;
    align-self: stretch;
    margin-left: auto;
}
.views button {
    width: 71px;
}
.views .active {
    width: 74px;
    background-color: #a4a4a4;
}
.zoom-step {
    width: 44px;
}
.zoom {
    appearance: none;
    width: 200px;
    height: 8px;
    margin: 0;
    border-radius: 4px;
    background-color: #999;
}
.zoom::-webkit-slider-thumb {
    appearance: none;
    width: 32px;
    height: 32px;
    border-radius: 50%;
    background-color: #fff;
    box-shadow: 0 1px 3px #888;
}
.percent {
    margin-left: 20px;
}
```

FILE: script.js
```js
const columns = "ABCDEFGHIJKLM".split("");
const rowCount = 24;
const current = { column: "C", row: 14 };

const months = [
    ["January", "12,000.00", "11,585.00"],
    ["February", "14,000.00", "15,478.00"],
    ["March", "13,000.00", "10,000.00"],
    ["April", "10,000.00", "14,000.00"],
    ["May", "12,000.00", "11,456.00"],
    ["June", "14,000.00", "14,023.00"],
    ["July", "13,000.00", "12,897.00"],
    ["August", "15,000.00", "14,856.00"],
    ["September", "10,000.00", "12,000.00"],
    ["October", "15,000.00", "17,562.00"],
    ["November", "10,000.00", "8,000.00"],
    ["December", "12,000.00", "11,250.00"]
];

let header = '<th class="corner"><svg width="52" height="52" viewBox="0 0 52 52"><path d="M52 0v52H0z" fill="#dedede"/></svg></th>';
for (let column of columns) {
    header += `<th class="${column === current.column ? "current" : ""}">${column}</th>`;
}
document.getElementById("columns").innerHTML = header;

function cell(row, index) {
    if (row === 1) {
        return `<td class="heading">${["Month", "Budget", "Expenses"][index] || ""}</td>`;
    }
    if (row === current.row && columns[index] === current.column) {
        return '<td class="selected"></td>';
    }
    const month = months[row - 2];
    if (!month || index > 2) {
        return "<td></td>";
    }
    if (index === 0) {
        return `<td>${month[0]}</td>`;
    }
    return `<td class="money"><div><span>$</span><span>${month[index]}</span></div></td>`;
}

let body = "";
for (let row = 1; row <= rowCount; row++) {
    body += `<tr><th class="row-number ${row === current.row ? "current" : ""}">${row}</th>`;
    for (let i = 0; i < columns.length; i++) {
        body += cell(row, i);
    }
    body += "</tr>";
}
document.getElementById("rows").innerHTML = body;
```
